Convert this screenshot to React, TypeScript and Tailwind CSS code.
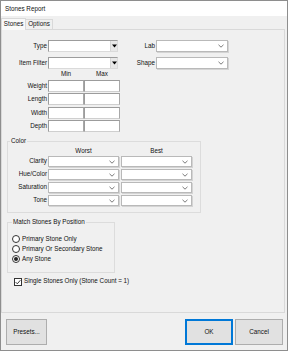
import React from "react";

const Chevron = () => (
  <svg width="6" height="4" viewBox="0 0 6 4" className="absolute right-[3px] top-1/2 -translate-y-1/2">
    <path d="M0.5 0.8 L3 3.2 L5.5 0.8" fill="none" stroke="#6b6b6b" strokeWidth="0.9" />
  </svg>
);

const FlatCombo = ({ w, h = 11 }: { w: string; h?: number }) => (
  <div
    className={`relative ${w} ${h === 12 ? "h-[12px]" : "h-[11px]"} bg-white border border-[#b9b9b9] shadow-[1px_1px_0_#d4d4d4]`}
  >
    <Chevron />
  </div>
);

const ClassicCombo = () => (
  <div className="relative w-[70px] h-[12px] bg-white border border-[#9c9c9c] border-r-[#dadada] border-b-[#dadada] flex justify-end">
    <div className="w-[7px] h-full bg-[#e8e8e8] border-l border-[#d6d6d6] flex items-center justify-center">
      <svg width="5" height="4" viewBox="0 0 5 4">
        <path d="M0 0.5 H5 L2.5 3.5 Z" fill="#000" />
      </svg>
    </div>
  </div>
);

const Box = () => (
  <div className="w-[36px] h-[12px] bg-white border border-[#9c9c9c] border-r-[#a8a8a8] border-b-[#cfcfcf]" />
);

const Radio = ({ checked, label }: { checked?: boolean; label: string }) => (
  <div className="h-[10px] flex items-center gap-[2px] pl-[4px]">
    <div className="w-[8px] h-[8px] rounded-full border border-[#333] bg-white flex items-center justify-center">
      {checked && <div className="w-[4px] h-[4px] rounded-full bg-[#222]" />}
    </div>
    <span>{label}</span>
  </div>
);

export default function App() {
  const rows = ["Weight", "Length", "Width", "Depth"];
  const rowMt = ["mt-0", "mt-[1px]", "mt-[2px]", "mt-[1px]"];
  const colorRows = ["Clarity", "Hue/Color", "Saturation", "Tone"];
  return (
    <div className="w-[288px] h-[351px] border border-[#8e8e8e] bg-[#f0f0f0] flex flex-col overflow-hidden font-['Liberation_Sans',Arial,sans-serif] text-[6.3px] leading-none text-[#111]">
      {/* title bar */}
      <div className="h-[15px] shrink-0 bg-white flex items-center pl-[4px] pt-[1px]">Stones Report</div>
      {/* tabs */}
      <div className="h-[13px] shrink-0 flex items-end">
        <div className="relative z-10 -mb-px h-[12px] w-[25px] border border-b-0 border-[#d9d9d9] bg-[#f9f9f9] flex items-center justify-center">
          Stones
        </div>
        <div className="h-[10px] w-[27px] border border-l-0 border-b-0 border-[#d9d9d9] bg-[#f0f0f0] flex items-center justify-center">
          Options
        </div>
      </div>
      {/* panel */}
      <div className="h-[284px] shrink-0 mr-[2px] border border-[#d9d9d9] flex flex-col">
        {/* Type / Lab */}
        <div className="mt-[10px] h-[12px] flex items-center">
          <div className="w-[46px] text-right pr-[1px]">Type</div>
          <ClassicCombo />
          <div className="w-[38px] text-right pr-[1px]">Lab</div>
          <FlatCombo w="w-[72px]" h={12} />
        </div>
        <div className="mt-[5px] h-[12px] flex items-center">
          <div className="w-[46px] text-right pr-[1px]">Item Filter</div>
          <ClassicCombo />
          <div className="w-[38px] text-right pr-[1px]">Shape</div>
          <FlatCombo w="w-[72px]" h={12} />
        </div>
        {/* min max */}
        <div className="h-[11px] flex items-center pl-[46px]">
          <div className="w-[36px] text-center">Min</div>
          <div className="w-[36px] text-center">Max</div>
        </div>
        {rows.map((r, i) => (
          <div key={r} className={`${rowMt[i]} h-[12px] flex items-center`}>
            <div className="w-[46px] text-right pr-[1px]">{r}</div>
            <Box />
            <Box />
          </div>
        ))}
        {/* Color group */}
        <div className="relative mt-[9px] ml-[5px] w-[194px] h-[72px] border border-[#dcdcdc] flex flex-col">
          <span className="absolute left-[2px] -top-[4px] bg-[#f0f0f0] px-[1px]">Color</span>
          <div className="mt-[4px] h-[10px] flex items-center pl-[40px]">
            <div className="w-[71px] text-center">Worst</div>
            <div className="w-[2px]" />
            <div className="w-[71px] text-center">Best</div>
          </div>
          {colorRows.map((r, i) => (
            <div key={r} className={`${i === 0 ? "mt-0" : "mt-[2px]"} h-[11px] flex items-center`}>
              <div className="w-[40px] text-right pr-[1px]">{r}</div>
              <FlatCombo w="w-[71px]" />
              <div className="w-[2px]" />
              <FlatCombo w="w-[71px]" />
            </div>
          ))}
        </div>
        {/* Match group */}
        <div className="relative mt-[9px] ml-[5px] w-[108px] h-[51px] border border-[#dcdcdc] flex flex-col">
          <span className="absolute left-[4px] -top-[4px] bg-[#f0f0f0] px-[1px]">Match Stones By Position</span>
          <div className="mt-[11px]">
            <Radio label="Primary Stone Only" />
            <Radio label="Primary Or Secondary Stone" />
            <Radio checked label="Any Stone" />
          </div>
        </div>
        {/* checkbox */}
        <div className="mt-[4px] h-[9px] flex items-center gap-[2px] pl-[12px]">
          <div className="w-[8px] h-[8px] border border-[#333] bg-white flex items-center justify-center">
            <svg width="6" height="6" viewBox="0 0 6 6">
              <path d="M0.6 3.1 L2.3 4.8 L5.4 1.2" fill="none" stroke="#222" strokeWidth="0.9" />
            </svg>
          </div>
          <span>Single Stones Only (Stone Count = 1)</span>
        </div>
      </div>
      {/* buttons */}
      <div className="flex-1 flex items-start pt-[6px] pl-[5px] pr-[4px]">
        <div className="w-[41px] h-[26px] border border-[#adadad] bg-[#e1e1e1] flex items-center justify-center">
          Presets...
        </div>
        <div className="flex-1" />
        <div className="w-[48px] h-[26px] border-2 border-[#0078d7] bg-[#e1e1e1] flex items-center justify-center">
          OK
        </div>
        <div className="w-[48px] h-[26px] ml-[2px] border border-[#adadad] bg-[#e1e1e1] flex items-center justify-center">
          Cancel
        </div>
      </div>
    </div>
  );
}
